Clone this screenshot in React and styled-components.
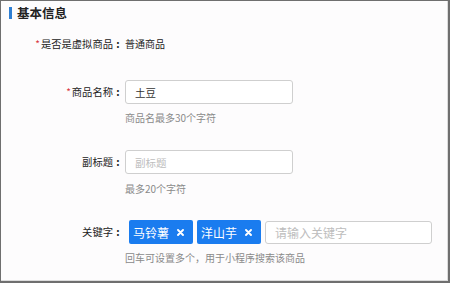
import React from "react";
import styled, { createGlobalStyle } from "styled-components";

const Global = createGlobalStyle`
  html, body { margin: 0; padding: 0; background: #fff; }
  * { box-sizing: border-box; }
  body { font-family: "Noto Sans CJK SC", "Noto Sans", sans-serif; }
`;

const Frame = styled.div`
  width: 450px;
  height: 283px;
  background: #fdfcfd;
  border-top: 1px solid #6f6f6f;
  border-left: 1px solid #6f6f6f;
  border-right: 2px solid #6f6f6f;
  border-bottom: 2px solid #6f6f6f;
  box-shadow: inset -1px -1px 0 #dcdcdc;
  display: flex;
  flex-direction: column;
  overflow: hidden;
`;

const Header = styled.div`
  height: 24px;
  display: flex;
  align-items: center;
  gap: 5px;
  padding-left: 8px;
`;

const Bar = styled.span`
  width: 3px;
  height: 12px;
  background: #2f7fd3;
`;

const Title = styled.h2`
  margin: 0;
  font-size: 12.5px;
  font-weight: 700;
  color: #222;
  line-height: 16px;
`;

const Row = styled.div`
  display: grid;
  grid-template-columns: 122px 1fr;
  column-gap: 2px;
  margin-top: ${(p) => p.$top}px;
`;

const Label = styled.div`
  font-size: 10.3px;
  color: #222;
  line-height: 16px;
  height: ${(p) => p.$h || 16}px;
  display: flex;
  align-items: center;
  justify-content: flex-end;
  white-space: nowrap;
`;

const Colon = styled.span`
  display: inline-block;
  width: 10px;
  text-align: center;
  font-weight: 700;
`;

const Star = styled.span`
  color: #d9363e;
  font-size: 10px;
  margin-right: 1px;
`;

const Field = styled.div`
  display: flex;
  flex-direction: column;
`;

const Value = styled.div`
  font-size: 10px;
  color: #222;
  line-height: 16px;
`;

const Input = styled.div`
  width: ${(p) => p.$w || 168}px;
  height: ${(p) => p.$h || 24}px;
  border: 1px solid #cfcfcf;
  border-radius: 3px;
  background: #fff;
  display: flex;
  align-items: center;
  padding-left: 9px;
  font-size: ${(p) => p.$fs || 10.5}px;
  color: ${(p) => (p.$ph ? "#bdbdbd" : "#333")};
`;

const Help = styled.div`
  margin-top: ${(p) => p.$top}px;
  font-size: 10px;
  color: #8a8a8a;
  line-height: 14px;
`;

const Tags = styled.div`
  display: flex;
  align-items: center;
  gap: 4px;
  margin-left: 4px;
`;

const Tag = styled.div`
  height: 24px;
  background: #1a7cef;
  border-radius: 2px;
  display: flex;
  align-items: center;
  padding: 0 9px 0 4px;
  gap: 8px;
  color: #fff;
  font-size: 12px;
`;

const Close = () => (
  <svg width="7" height="7" viewBox="0 0 7 7">
    <path d="M1 1L6 6M6 1L1 6" stroke="#fff" strokeWidth="1.9" strokeLinecap="round" />
  </svg>
);

export default function App() {
  return (
    <>
      <Global />
      <Frame>
        <Header>
          <Bar />
          <Title>基本信息</Title>
        </Header>

        <Row $top={11}>
          <Label><Star>*</Star>是否是虚拟商品<Colon>:</Colon></Label>
          <Field>
            <Value>普通商品</Value>
          </Field>
        </Row>

        <Row $top={28}>
          <Label $h={24}><Star>*</Star>商品名称<Colon>:</Colon></Label>
          <Field>
            <Input>土豆</Input>
            <Help $top={7}>商品名最多30个字符</Help>
          </Field>
        </Row>

        <Row $top={25}>
          <Label $h={24}>副标题<Colon>:</Colon></Label>
          <Field>
            <Input $ph>副标题</Input>
            <Help $top={8}>最多20个字符</Help>
          </Field>
        </Row>

        <Row $top={24}>
          <Label $h={24}>关键字<Colon>:</Colon></Label>
          <Field>
            <Tags>
              <Tag>马铃薯<Close /></Tag>
              <Tag>洋山芋<Close /></Tag>
              <Input $ph $w={167} $h={23} $fs={12}>请输入关键字</Input>
            </Tags>
            <Help $top={7}>回车可设置多个，用于小程序搜索该商品</Help>
          </Field>
        </Row>
      </Frame>
    </>
  );
}
